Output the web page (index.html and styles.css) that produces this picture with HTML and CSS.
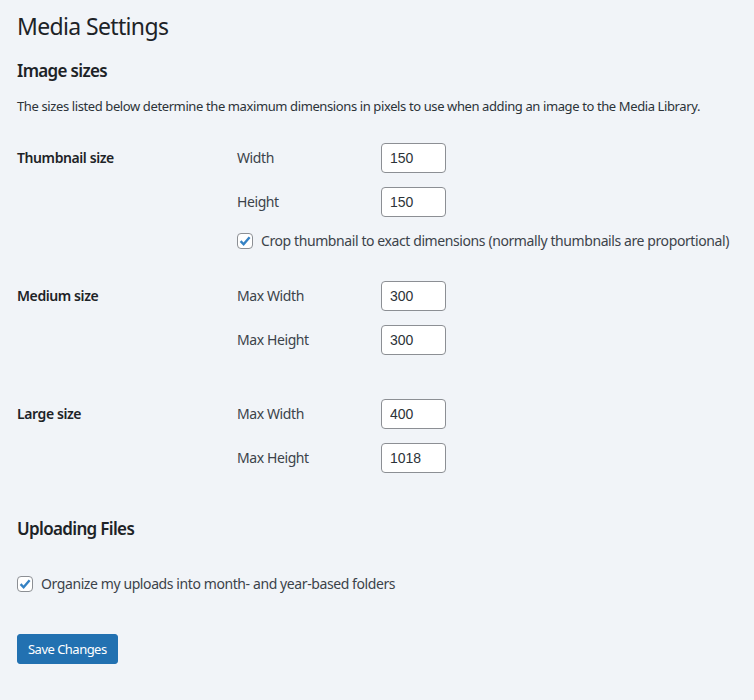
FILE: index.html
```html
<!DOCTYPE html>
<html lang="en">
<head>
<meta charset="utf-8">
<title>Media Settings</title>
<link rel="stylesheet" href="styles.css">
</head>
<body>
<div class="wrap">
  <h1 class="page-title">Media Settings</h1>
  <h2 class="section-title first">Image sizes</h2>
  <p class="desc">The sizes listed below determine the maximum dimensions in pixels to use when adding an image to the Media Library.</p>

  <div class="form-row">
    <div class="row-label">Thumbnail size</div>
    <div class="row-fields">
      <div class="field"><label class="field-label">Width</label><input class="num" type="text" value="150"></div>
      <div class="field"><label class="field-label">Height</label><input class="num" type="text" value="150"></div>
      <div class="check-row">
        <span class="checkbox"><svg viewBox="0 0 16 16" width="16" height="16"><path d="M3.6 8.2 L6.6 11.3 L12.6 4.2" fill="none" stroke="#3582c4" stroke-width="2.4" stroke-linecap="butt" stroke-linejoin="miter"/></svg></span>
        <span class="check-text">Crop thumbnail to exact dimensions (normally thumbnails are proportional)</span>
      </div>
    </div>
  </div>

  <div class="form-row medium">
    <div class="row-label">Medium size</div>
    <div class="row-fields">
      <div class="field"><label class="field-label">Max Width</label><input class="num" type="text" value="300"></div>
      <div class="field"><label class="field-label">Max Height</label><input class="num" type="text" value="300"></div>
    </div>
  </div>

  <div class="form-row">
    <div class="row-label">Large size</div>
    <div class="row-fields">
      <div class="field"><label class="field-label">Max Width</label><input class="num" type="text" value="400"></div>
      <div class="field"><label class="field-label">Max Height</label><input class="num" type="text" value="1018"></div>
    </div>
  </div>

  <h2 class="section-title uploads">Uploading Files</h2>
  <div class="check-row organize">
    <span class="checkbox"><svg viewBox="0 0 16 16" width="16" height="16"><path d="M3.6 8.2 L6.6 11.3 L12.6 4.2" fill="none" stroke="#3582c4" stroke-width="2.4" stroke-linecap="butt" stroke-linejoin="miter"/></svg></span>
    <span class="check-text">Organize my uploads into month- and year-based folders</span>
  </div>

  <button class="btn-primary" type="button">Save Changes</button>
</div>
</body>
</html>
```

FILE: styles.css
```css
html, body {
  margin: 0;
  padding: 0;
  background: #f1f4f8;
}
body {
  font-family: "Noto Sans", "Open Sans", sans-serif;
  color: #1d2327;
  font-size: 14px;
  letter-spacing: -0.029em;
}
.wrap {
  padding: 11px 17px 30px 17px;
}
.page-title {
  margin: 0;
  font-size: 23px;
  font-weight: 400;
  line-height: 30px;
  letter-spacing: -0.028em;
  color: #1d2327;
}
.section-title {
  margin: 0;
  font-size: 17px;
  font-weight: 600;
  line-height: 22px;
  letter-spacing: -0.039em;
  color: #1d2327;
}
.section-title.first {
  margin-top: 19px;
}
.desc {
  margin: 14px 0 12px 0;
  font-size: 13px;
  line-height: 20px;
  letter-spacing: -0.03em;
  color: #2c3338;
  white-space: nowrap;
}
.form-row {
  display: flex;
  padding: 15px 0;
}
.form-row.medium {
  padding-bottom: 29px;
}
.row-label {
  flex: none;
  width: 210px;
  padding: 5px 10px 0 0;
  box-sizing: border-box;
  font-weight: 600;
  line-height: 20px;
  color: #1d2327;
}
.row-fields {
  flex: none;
  padding-left: 10px;
  display: flex;
  flex-direction: column;
  gap: 14px;
}
.field {
  display: flex;
  align-items: center;
  height: 30px;
}
.field-label {
  flex: none;
  width: 144px;
  color: #3c434a;
  line-height: 20px;
}
.num {
  flex: none;
  box-sizing: border-box;
  width: 65px;
  height: 30px;
  margin: 0;
  padding: 0 8px;
  border: 1px solid #8c8f94;
  border-radius: 4px;
  background: #fff;
  font-family: "Liberation Sans", Arial, sans-serif;
  font-size: 14px;
  letter-spacing: 0;
  color: #2c3338;
}
.check-row {
  display: flex;
  align-items: center;
  gap: 8px;
  height: 20px;
  color: #3c434a;
  white-space: nowrap;
}
.checkbox {
  box-sizing: border-box;
  width: 16px;
  height: 16px;
  border: 1px solid #8c8f94;
  border-radius: 4px;
  background: #fff;
  position: relative;
  flex: none;
}
.checkbox svg {
  position: absolute;
  left: -1px;
  top: -1px;
}
.check-text {
  line-height: 20px;
}
.section-title.uploads {
  margin-top: 30px;
}
.check-row.organize {
  margin-top: 34px;
}
.btn-primary {
  display: block;
  margin-top: 40px;
  height: 30px;
  padding: 0 10px;
  border: 1px solid #2271b1;
  border-radius: 3px;
  background: #2271b1;
  color: #fff;
  font-family: "Noto Sans", "Open Sans", sans-serif;
  font-size: 13px;
  letter-spacing: -0.04em;
  line-height: 28px;
}
```
